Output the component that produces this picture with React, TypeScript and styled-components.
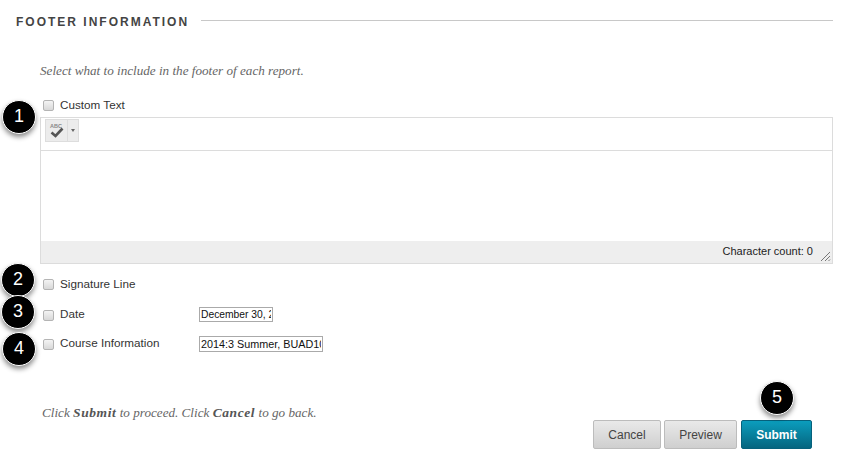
import React from "react";
import styled, { createGlobalStyle } from "styled-components";

const GlobalStyle = createGlobalStyle`
  html, body {
    margin: 0;
    background: #fff;
    font-family: "Liberation Sans", Arial, sans-serif;
  }
`;

const Page = styled.div`
  position: relative;
  width: 841px;
  height: 465px;
  overflow: hidden;
  box-sizing: border-box;
  padding: 14px 8px 0 16px;
`;

const SectionHead = styled.div`
  display: flex;
  align-items: center;
  gap: 12px;
  height: 14px;
`;

const SectionTitle = styled.h2`
  margin: 1px 0 0;
  font-size: 12px;
  line-height: 14px;
  font-weight: 700;
  letter-spacing: 2px;
  color: #444;
  white-space: nowrap;
`;

const SectionRule = styled.div`
  flex: 1;
  height: 1px;
  margin-top: -2px;
  background: #c8c8c8;
`;

const Body = styled.div`
  padding-left: 24px;
`;

const Hint = styled.p`
  margin: 0;
  font-family: "Liberation Serif", Georgia, serif;
  font-style: italic;
  font-size: 13.15px;
  line-height: 14px;
  color: #666;
  b {
    font-size: 13.5px;
    font-weight: 700;
    letter-spacing: 0.6px;
    color: #555;
  }
`;

const Intro = styled(Hint)`
  padding-top: 36px;
`;

const Row = styled.label<{ $top: number }>`
  display: flex;
  align-items: center;
  min-height: 14px;
  margin-top: ${(p) => p.$top}px;
  font-size: 11.7px;
  color: #333;
`;

const Box = styled.span`
  flex: none;
  box-sizing: border-box;
  width: 11px;
  height: 11px;
  margin: 1px 6px 0 3px;
  border: 1px solid #b4b4b4;
  border-radius: 2px;
  background: linear-gradient(#f4f4f4, #d8d8d8);
`;

const RowLabel = styled.span<{ $lift?: number }>`
  width: 139px;
  flex: none;
  margin-top: ${(p) => -(p.$lift ?? 2)}px;
`;

const TextField = styled.input<{ $width: number; $height: number; $size: number }>`
  box-sizing: border-box;
  width: ${(p) => p.$width}px;
  height: ${(p) => p.$height}px;
  padding: 0 1px;
  border: 1px solid #aaa;
  border-radius: 0;
  font-family: "Liberation Sans", Arial, sans-serif;
  font-size: ${(p) => p.$size}px;
  color: #111;
  background: #fff;
  outline: none;
`;

const Editor = styled.div`
  margin-top: 5px;
  height: 147px;
  box-sizing: border-box;
  border: 1px solid #dcdcdc;
  display: flex;
  flex-direction: column;
`;

const Toolbar = styled.div`
  height: 33px;
  flex: none;
  box-sizing: border-box;
  padding: 1px 4px;
  border-bottom: 1px solid #dcdcdc;
`;

const SpellButton = styled.div`
  display: flex;
  width: 34px;
  height: 23px;
  box-sizing: border-box;
  border: 1px solid #ddd;
  background: #ececec;
`;

const SpellIcon = styled.div`
  width: 21px;
  flex: none;
  border-right: 1px solid #ddd;
  display: flex;
  align-items: center;
  justify-content: center;
`;

const SpellArrow = styled.div`
  flex: 1;
  display: flex;
  align-items: center;
  justify-content: center;
  &::after {
    content: "";
    border-left: 2.5px solid transparent;
    border-right: 2.5px solid transparent;
    border-top: 3px solid #666;
  }
`;

const EditArea = styled.div`
  flex: 1;
  background: #fff;
`;

const StatusBar = styled.div`
  height: 22px;
  flex: none;
  display: flex;
  align-items: center;
  justify-content: flex-end;
  gap: 7px;
  padding: 0 1px 0 0;
  background: #eeeeee;
  font-size: 11px;
  color: #222;
`;

const StatusText = styled.span`
  margin-top: -3px;
`;

const Grip = styled.svg`
  width: 11px;
  height: 11px;
  margin-top: 8px;
`;

const BottomHint = styled(Hint)`
  margin: 54px 0 0 2px;
`;

const Actions = styled.div`
  display: flex;
  justify-content: flex-end;
  gap: 3px;
  margin: 0 21px 0 0;
`;

const Btn = styled.button<{ $width: number; $primary?: boolean }>`
  box-sizing: border-box;
  width: ${(p) => p.$width}px;
  height: 29px;
  padding: 0;
  margin-left: ${(p) => (p.$primary ? 1 : 0)}px;
  border-radius: 2px;
  border: 1px solid ${(p) => (p.$primary ? "#06617c" : "#bcbcbc")};
  background: ${(p) =>
    p.$primary
      ? "linear-gradient(#0b9dbd, #05657f)"
      : "linear-gradient(#e9e9e9, #cfcfcf)"};
  color: ${(p) => (p.$primary ? "#fff" : "#444")};
  font-family: "Liberation Sans", Arial, sans-serif;
  font-size: 12px;
  font-weight: ${(p) => (p.$primary ? 700 : 400)};
`;

const Badge = styled.div<{ $x: number; $y: number }>`
  position: absolute;
  left: ${(p) => p.$x - 17}px;
  top: ${(p) => p.$y - 17}px;
  width: 34px;
  height: 34px;
  border-radius: 50%;
  background: #000;
  border: 1px solid #fff;
  box-sizing: border-box;
  box-shadow: 0 3px 5px rgba(0, 0, 0, 0.45);
  color: #fff;
  font-size: 18px;
  line-height: 31px;
  text-align: center;
`;

const badges = [
  { n: 1, x: 19, y: 117 },
  { n: 2, x: 18, y: 280 },
  { n: 3, x: 18, y: 312 },
  { n: 4, x: 19, y: 349 },
  { n: 5, x: 777, y: 398 },
];

export default function App() {
  return (
    <Page>
      <GlobalStyle />
      <SectionHead>
        <SectionTitle>FOOTER INFORMATION</SectionTitle>
        <SectionRule />
      </SectionHead>
      <Body>
        <Intro>Select what to include in the footer of each report.</Intro>
        <Row $top={20}>
          <Box />
          <RowLabel>Custom Text</RowLabel>
        </Row>
        <Editor>
          <Toolbar>
            <SpellButton>
              <SpellIcon>
                <svg width="16" height="17" viewBox="0 0 16 17">
                  <text
                    x="1"
                    y="6"
                    fontFamily="Liberation Sans, sans-serif"
                    fontSize="5.5"
                    fontWeight="700"
                    fill="#888"
                  >
                    ABC
                  </text>
                  <path
                    d="M2.5 10.5 L6.5 14 L13.5 6.5"
                    fill="none"
                    stroke="#555"
                    strokeWidth="2.6"
                  />
                </svg>
              </SpellIcon>
              <SpellArrow />
            </SpellButton>
          </Toolbar>
          <EditArea />
          <StatusBar>
            <StatusText>Character count: 0</StatusText>
            <Grip viewBox="0 0 11 11">
              <path d="M1 10 L10 1 M5 10 L10 5 M8.5 10 L10 8.5" stroke="#777" strokeWidth="1" fill="none" />
            </Grip>
          </StatusBar>
        </Editor>
        <Row $top={13}>
          <Box />
          <RowLabel>Signature Line</RowLabel>
        </Row>
        <Row $top={16}>
          <Box />
          <RowLabel>Date</RowLabel>
          <TextField $width={74} $height={15} $size={10.3} readOnly value="December 30, 2014" />
        </Row>
        <Row $top={14}>
          <Box />
          <RowLabel $lift={4}>Course Information</RowLabel>
          <TextField $width={124} $height={16} $size={10.8} readOnly value="2014:3 Summer, BUAD101" />
        </Row>
        <BottomHint>
          Click <b>Submit</b> to proceed. Click <b>Cancel</b> to go back.
        </BottomHint>
        <Actions>
          <Btn $width={68}>Cancel</Btn>
          <Btn $width={73}>Preview</Btn>
          <Btn $width={71} $primary>
            Submit
          </Btn>
        </Actions>
      </Body>
      {badges.map((b) => (
        <Badge key={b.n} $x={b.x} $y={b.y}>
          {b.n}
        </Badge>
      ))}
    </Page>
  );
}
